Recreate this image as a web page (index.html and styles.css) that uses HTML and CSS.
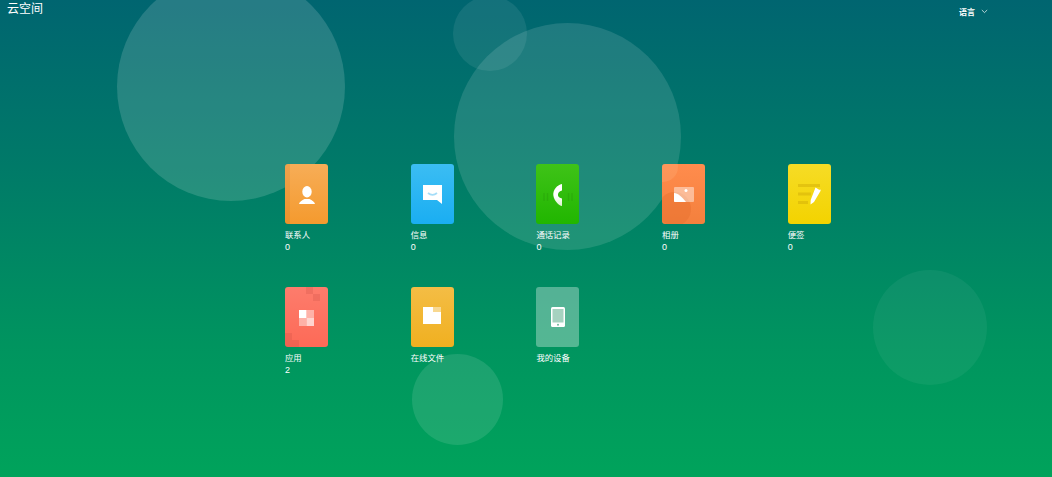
FILE: index.html
```html
<!DOCTYPE html>
<html lang="zh">
<head>
<meta charset="utf-8">
<title>云空间</title>
<link rel="stylesheet" href="styles.css">
</head>
<body>
<div class="bubble b1"></div>
<div class="bubble b2"></div>
<div class="bubble b3"></div>
<div class="bubble b4"></div>
<div class="bubble b5"></div>
<header class="top">
  <div class="title">云空间</div>
  <div class="lang"><span>语言</span>
    <svg class="chev" width="7" height="5" viewBox="0 0 7 5"><path d="M.8 1l2.700 2.600L6.200 1" fill="none" stroke="#fff" stroke-opacity=".7"/></svg>
  </div>
</header>
<main class="grid">
  <a class="item">
    <div class="card contact"><i class="spine"></i>
      <svg class="ico-low" width="16" height="18" viewBox="0 0 16 18"><ellipse cx="8" cy="5.700" rx="4.700" ry="5.700" fill="#fff"/><path d="M0 18c.3-2.500 3-3.500 5.500-5h5c2.500 1.500 5.200 2.500 5.500 5z" fill="#fff"/></svg>
    </div>
    <div class="name">联系人</div><div class="num">0</div>
  </a>
  <a class="item">
    <div class="card msg">
      <svg class="ico-low" width="19" height="19" viewBox="0 0 19 19"><path d="M0 0h19v19l-5-4H0z" fill="#fff"/><path d="M5 8c3 2.500 6 2.500 9 0" fill="none" stroke="#a5ddf8" stroke-width="1.800"/></svg>
    </div>
    <div class="name">信息</div><div class="num">0</div>
  </a>
  <a class="item">
    <div class="card phone">
      <svg class="phone-lines" width="30" height="10" viewBox="0 0 30 10"><path d="M1 1v8M4.500 1v8M25.500 1v8M29 1v8" stroke="#000" stroke-opacity=".07" stroke-width="1.500"/></svg>
      <svg class="ico-low" width="9" height="22" viewBox="0 0 9 22"><defs><linearGradient id="ph" x1="0" y1="0" x2="0" y2="1"><stop offset=".55" stop-color="#fff"/><stop offset="1" stop-color="#d8f2cc"/></linearGradient></defs><path d="M9 0v6.500C7 7 5.500 8 5 10c-.3 2 .5 3.500 4 4.500V22C6 21.500 1 17 .3 11 0 6 4 1 9 0z" fill="url(#ph)"/></svg>
    </div>
    <div class="name">通话记录</div><div class="num">0</div>
  </a>
  <a class="item">
    <div class="card album"><i class="blob1"></i><i class="blob2"></i>
      <svg class="ico-low" width="20" height="15" viewBox="0 0 20 15"><rect width="20" height="15" rx="1" fill="#fff" fill-opacity=".45"/><circle cx="12" cy="3.500" r="1.500" fill="#fff"/><path d="M0 6c4 0 8 4 12 9H1a1 1 0 0 1-1-1z" fill="#fff"/></svg>
    </div>
    <div class="name">相册</div><div class="num">0</div>
  </a>
  <a class="item">
    <div class="card note">
      <svg class="ico-low" width="23" height="21" viewBox="0 0 23 21"><path d="M0 1.500h22M0 10h13M0 18.500h10" stroke="#d6b30a" stroke-opacity=".55" stroke-width="3"/><path d="M17.500 3.500l4 2.500c.7-1 1.500-.3 1 1l-6.500 11-3.500 2.500.2-4.500z" fill="#fff"/></svg>
    </div>
    <div class="name">便签</div><div class="num">0</div>
  </a>
  <a class="item">
    <div class="card apps"><i class="px p1"></i><i class="px p2"></i><i class="px p3"></i><i class="px p4"></i>
      <svg class="ico-low" width="15" height="16" viewBox="0 0 15 16"><rect width="7.500" height="8" fill="#fff"/><rect x="7.500" width="7.500" height="8" fill="#fff" fill-opacity=".45"/><rect y="8" width="7.500" height="8" fill="#fff" fill-opacity=".45"/><rect x="7.500" y="8" width="7.500" height="8" fill="#fff" fill-opacity=".7"/></svg>
    </div>
    <div class="name">应用</div><div class="num">2</div>
  </a>
  <a class="item">
    <div class="card files">
      <svg class="ico-up" width="18" height="17" viewBox="0 0 18 17"><path d="M0 0h10v5h8v12H0z" fill="#fff"/><path d="M10 0h8v5h-8z" fill="#fff" fill-opacity=".45"/></svg>
    </div>
    <div class="name">在线文件</div>
  </a>
  <a class="item">
    <div class="card device">
      <svg width="14" height="20" viewBox="0 0 14 20"><rect width="14" height="20" rx="1.500" fill="#fff"/><rect x="1.500" y="2" width="11" height="13.500" fill="#a6d2c0"/><circle cx="7" cy="17.700" r="1" fill="#6fb99c"/></svg>
    </div>
    <div class="name">我的设备</div>
  </a>
</main>
</body>
</html>
```

FILE: styles.css
```css
* { box-sizing: border-box; }
html, body { height: 100%; }
body {
  margin: 0;
  height: 477px;
  overflow: hidden;
  position: relative;
  background: linear-gradient(180deg, #006570 0%, #007a68 35%, #00945f 72%, #00a35b 100%);
  color: #fff;
  font-family: "Liberation Sans", "Noto Sans CJK SC", sans-serif;
}
.bubble { position: absolute; border-radius: 50%; background: rgba(255, 255, 255, .12); }
.b1 { left: 117px; top: -28px; width: 228px; height: 229px; background: rgba(255, 255, 255, .15); }
.b2 { left: 454px; top: 23px; width: 227px; height: 227px; }
.b3 { left: 453px; top: -4px; width: 74px; height: 75px; background: rgba(255, 255, 255, .08); }
.b4 { left: 873px; top: 270px; width: 114px; height: 115px; background: rgba(255, 255, 255, .05); }
.b5 { left: 412px; top: 354px; width: 91px; height: 91px; background: rgba(255, 255, 255, .11); }

.top { position: relative; display: flex; justify-content: space-between; align-items: flex-start; padding-left: 7px; }
.title { font-size: 12px; line-height: 19px; height: 18px; }
.lang { display: flex; align-items: center; gap: 6px; font-size: 8px; font-weight: 700; height: 25px; margin-right: 64px; margin-top: -1px; }
.chev { display: block; }

.grid {
  position: relative;
  display: grid;
  grid-template-columns: repeat(5, 125.700px);
  grid-auto-rows: 123px;
  margin: 140px 0 0 285px;
}
.item { display: block; }
.card {
  position: relative;
  width: 43px;
  height: 60px;
  border-radius: 3px;
  overflow: hidden;
  display: flex;
  align-items: center;
  justify-content: center;
  margin-bottom: 5px;
}
.card svg { position: relative; display: block; }
.card .ico-low { margin-top: 1px; }
.card .ico-up { margin-top: -3px; }
.card .phone-lines { position: absolute; left: 6.500px; top: 28px; }
.name { font-size: 8.400px; line-height: 12px; }
.num { font-size: 9px; line-height: 12px; }

.contact { background: linear-gradient(180deg, #f7ad57, #f49a2e); }
.spine { position: absolute; left: 0; top: 0; bottom: 0; width: 5px; background: rgba(190, 100, 20, .14); }
.msg { background: linear-gradient(180deg, #3bbdf3, #1aaef2); }
.phone { background: linear-gradient(180deg, #3fc318, #21b600); }
.album { background: linear-gradient(180deg, #ff8c4d, #f4803d); }
.blob1 { position: absolute; left: -4px; top: 28px; width: 33px; height: 34px; border-radius: 50%; background: #e8722f; opacity: .5; }
.blob2 { position: absolute; left: -14px; top: -12px; width: 30px; height: 30px; border-radius: 50%; background: #ffb07c; opacity: .3; }
.note { background: linear-gradient(180deg, #f6dc26, #f3d300); }
.apps { background: linear-gradient(180deg, #fd7c6c, #fd6a57); }
.px { position: absolute; width: 7px; height: 7px; background: rgba(190, 70, 60, .2); }
.p1 { left: 21px; top: 0; }
.p2 { left: 28px; top: 7px; }
.p3 { left: 0; top: 46px; width: 7px; height: 14px; }
.p4 { left: 7px; top: 53px; }
.files { background: linear-gradient(180deg, #f4bd45, #f0b020); }
.device { background: rgba(255, 255, 255, .33); }
```
